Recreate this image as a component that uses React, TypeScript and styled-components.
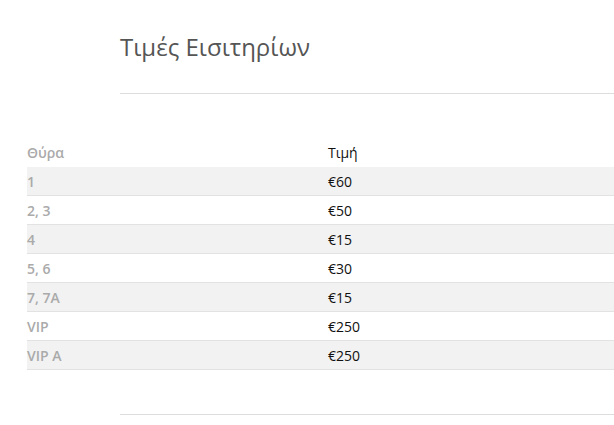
import * as React from 'react';
import styled, { createGlobalStyle } from 'styled-components';

const GlobalStyle = createGlobalStyle`
  body {
    margin: 0;
    background: #fff;
    font-family: 'Open Sans', 'Noto Sans', sans-serif;
    overflow: hidden;
  }
`;

const Page = styled.div`
  width: 614px;
  height: 425px;
  overflow: hidden;
`;

const Header = styled.div`
  margin-left: 120px;
  padding-top: 29px;
`;

const Title = styled.h1`
  margin: 0;
  font-size: 24px;
  font-weight: 400;
  line-height: 36px;
  color: #555;
`;

const Rule = styled.hr`
  border: 0;
  border-top: 1px solid #ddd;
  margin: 28px 0 0;
  height: 0;
`;

const Table = styled.div`
  margin: 44px 0 0 27px;
  width: 602px;
`;

const Row = styled.div<{ shaded?: boolean; head?: boolean }>`
  display: grid;
  grid-template-columns: 301px 1fr;
  height: ${(p) => (p.head ? 29 : 28)}px;
  align-items: center;
  background: ${(p) => (p.shaded ? '#f2f2f2' : '#fff')};
  border-bottom: ${(p) => (p.head ? '0' : '1px solid #e2e2e2')};
  font-size: 14px;
`;

const Gate = styled.span`
  color: #aaa;
  font-weight: 600;
`;

const Price = styled.span`
  color: #111;
`;

const FooterRule = styled.hr`
  border: 0;
  border-top: 1px solid #ddd;
  margin: 44px 0 0 120px;
  height: 0;
`;

const rows = [
  { gate: '1', price: '€60' },
  { gate: '2, 3', price: '€50' },
  { gate: '4', price: '€15' },
  { gate: '5, 6', price: '€30' },
  { gate: '7, 7A', price: '€15' },
  { gate: 'VIP', price: '€250' },
  { gate: 'VIP A', price: '€250' },
];

export default function App() {
  return (
    <Page>
      <GlobalStyle />
      <Header>
        <Title>Τιμές Εισιτηρίων</Title>
        <Rule />
      </Header>
      <Table>
        <Row head>
          <Gate>Θύρα</Gate>
          <Price>Τιμή</Price>
        </Row>
        {rows.map((r, i) => (
          <Row key={i} shaded={i % 2 === 0}>
            <Gate>{r.gate}</Gate>
            <Price>{r.price}</Price>
          </Row>
        ))}
      </Table>
      <FooterRule />
    </Page>
  );
}
